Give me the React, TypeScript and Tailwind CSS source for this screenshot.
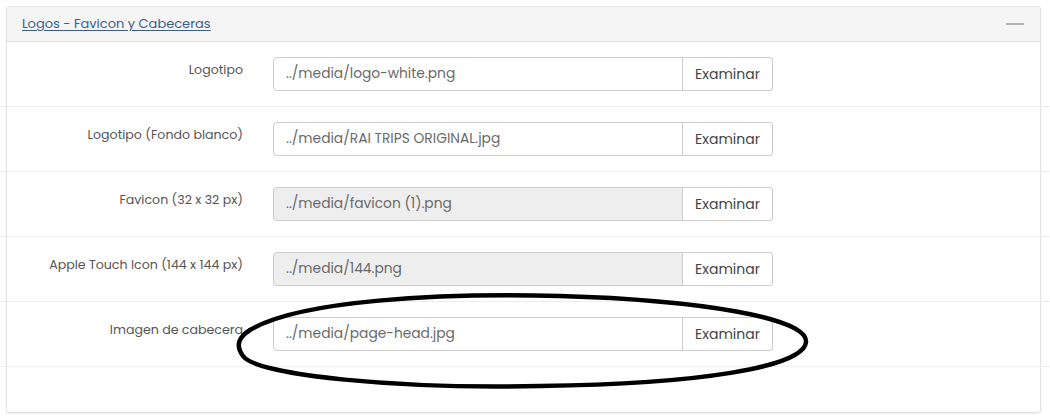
import React from "react";

const rows = [
  { label: "Logotipo", value: "../media/logo-white.png", disabled: false },
  { label: "Logotipo (Fondo blanco)", value: "../media/RAI TRIPS ORIGINAL.jpg", disabled: false },
  { label: "Favicon (32 x 32 px)", value: "../media/favicon (1).png", disabled: true },
  { label: "Apple Touch Icon (144 x 144 px)", value: "../media/144.png", disabled: true },
  { label: "Imagen de cabecera", value: "../media/page-head.jpg", disabled: false },
];

export default function App() {
  return (
    <div
      className="relative w-[1050px] h-[420px] bg-white overflow-hidden pt-[6px]"
      style={{ fontFamily: "Poppins, 'Open Sans', Lato, sans-serif" }}
    >
      <div className="ml-[6px] w-[1035px] h-[407px] border border-[#e3e3e3] rounded-[3px] shadow-[0_1px_2px_rgba(0,0,0,0.08)] flex flex-col">
        <div className="h-[35px] bg-[#f5f5f5] border-b border-[#dddddd] flex items-center justify-between pl-[15px] pr-[16px]">
          <a className="text-[13px] text-[#3a5f8f] underline underline-offset-2 decoration-[#3a5f8f]">
            Logos - Favicon y Cabeceras
          </a>
          <span className="block w-[18px] h-[2px] bg-[#b5b5b5]" />
        </div>
        <div className="flex flex-col">
          {rows.map((r) => (
            <div
              key={r.label}
              className="ml-[-7px] mr-[-10px] h-[65px] border-b border-[#eeeeee] flex items-start pt-[15px]"
            >
              <div className="w-[243px] text-right text-[12.6px] text-[#555555] pt-[4px]">
                {r.label}
              </div>
              <div className="ml-[30px] w-[500px] h-[34px] flex">
                <div
                  className={`flex-1 h-full border border-[#cccccc] rounded-l-[4px] flex items-center pl-[12px] text-[13.8px] text-[#6a6a6a] ${
                    r.disabled ? "bg-[#eeeeee]" : "bg-white"
                  }`}
                >
                  {r.value}
                </div>
                <div className="w-[90px] h-full border border-l-0 border-[#cccccc] rounded-r-[4px] bg-white flex items-center justify-center text-[14px] text-[#444444]">
                  Examinar
                </div>
              </div>
            </div>
          ))}
        </div>
      </div>
      <svg
        className="absolute left-0 top-0 pointer-events-none"
        width="1050"
        height="420"
        viewBox="0 0 1050 420"
      >
        <path
          d="M 250 330 C 300 300, 440 293, 560 296 C 700 300, 808 318, 806 342 C 804 367, 700 384, 540 386 C 400 389, 258 376, 243 356 C 235 345, 239 337, 250 330 Z"
          fill="none"
          stroke="#000"
          strokeWidth="4.5"
        />
      </svg>
    </div>
  );
}
